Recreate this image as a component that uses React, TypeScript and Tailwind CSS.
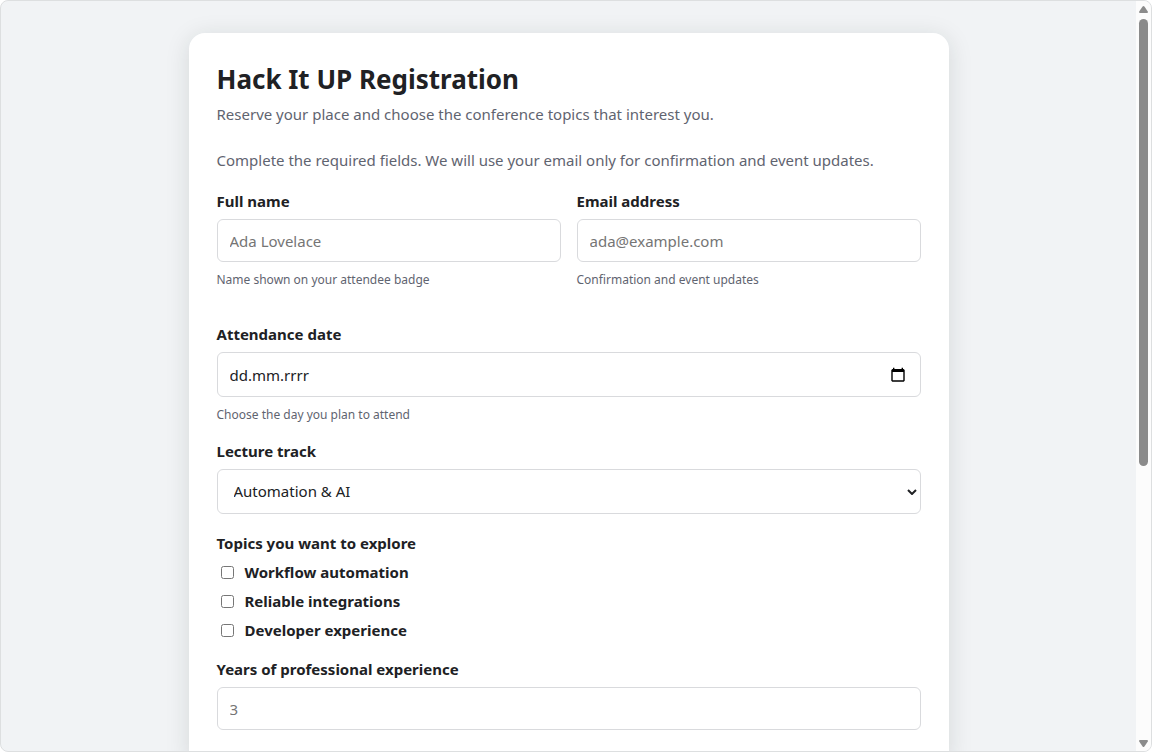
import { useState, type ReactNode } from "react";

const INPUT_STYLE =
  "w-full rounded-md border border-[#d9dadd] bg-white px-3 text-[15px] text-[#202124] focus:outline-none focus:ring-2 focus:ring-blue-400";

const TOPICS = [
  "Workflow automation",
  "Reliable integrations",
  "Developer experience",
];

const TRACKS = ["Automation & AI", "Integrations", "Developer tools"];

interface FieldProps {
  id: string;
  label: string;
  help?: string;
  children: ReactNode;
}

function Field({ id, label, help, children }: FieldProps) {
  return (
    <div className="flex flex-col">
      <label htmlFor={id} className="mb-[7px] text-[15px] leading-[22px] font-bold">
        {label}
      </label>
      {children}
      {help && (
        <p id={`${id}-help`} className="mt-2 text-xs leading-5 text-[#5f6470]">
          {help}
        </p>
      )}
    </div>
  );
}

function CalendarIcon() {
  return (
    <svg width="16" height="16" viewBox="0 0 16 16" aria-hidden="true">
      <path
        d="M3 .7h1.4V2h7.2V.7H13V2h.6l1.1 1v10.7l-1 1H2.3l-1-1V3l1.1-1H3zM2.7 5v8.3h10.6V5z"
        fill="#000"
        fillRule="evenodd"
      />
    </svg>
  );
}

function Scrollbar() {
  return (
    <div
      className="flex w-[15px] shrink-0 flex-col items-center bg-[#fcfcfc] py-1"
      aria-hidden="true"
    >
      <svg width="9" height="8" viewBox="0 0 9 8">
        <path
          d="M3.6 1.6Q4.5.4 5.4 1.6L8.8 6.5Q9.3 8 8 8H1Q-.3 8 .2 6.5Z"
          fill="#8b8b8b"
        />
      </svg>
      <div className="my-1.5 w-full flex-1">
        <div className="mx-auto h-[62.6%] w-[9px] rounded-full bg-[#8b8b8b]" />
      </div>
      <svg width="9" height="8" viewBox="0 0 9 8">
        <path
          d="M3.6 7.4Q4.5 8.6 5.4 7.4L8.8 2.5Q9.3 1 8 1H1Q-.3 1 .2 2.5Z"
          fill="#8b8b8b"
        />
      </svg>
    </div>
  );
}

export default function App() {
  const [topics, setTopics] = useState<string[]>([]);

  const toggleTopic = (topic: string) => {
    setTopics((prev) =>
      prev.includes(topic) ? prev.filter((t) => t !== topic) : [...prev, topic],
    );
  };

  return (
    <div className="flex h-screen overflow-hidden rounded-lg border border-[#dddfe0] bg-[#f1f3f5] font-['Noto_Sans','Open_Sans',sans-serif] text-[#202124]">
      <main className="min-w-0 flex-1 overflow-hidden px-4 pt-8">
        <form className="mx-auto min-h-full max-w-[760px] rounded-t-2xl bg-white p-7 shadow-[0_4px_24px_rgba(24,39,32,0.13)]">
          <h1 className="text-[26px] leading-9 font-bold">
            Hack It UP Registration
          </h1>
          <p className="mt-1.5 text-[15px] leading-[22px] text-[#5f6470]">
            Reserve your place and choose the conference topics that interest
            you.
          </p>
          <p className="mt-6 text-[15px] leading-[22px] text-[#5f6470]">
            Complete the required fields. We will use your email only for
            confirmation and event updates.
          </p>

          <div className="mt-[19px] grid grid-cols-1 gap-4 sm:grid-cols-2">
            <Field
              id="name"
              label="Full name"
              help="Name shown on your attendee badge"
            >
              <input
                id="name"
                type="text"
                placeholder="Ada Lovelace"
                aria-describedby="name-help"
                className={`${INPUT_STYLE} h-[43px] placeholder:text-[#757575]`}
              />
            </Field>
            <Field
              id="email"
              label="Email address"
              help="Confirmation and event updates"
            >
              <input
                id="email"
                type="email"
                placeholder="ada@example.com"
                aria-describedby="email-help"
                className={`${INPUT_STYLE} h-[43px] placeholder:text-[#757575]`}
              />
            </Field>
          </div>

          <div className="mt-[33px] flex flex-col gap-[15px]">
            <Field
              id="date"
              label="Attendance date"
              help="Choose the day you plan to attend"
            >
              <div className="relative">
                <input
                  id="date"
                  type="text"
                  placeholder="dd.mm.rrrr"
                  aria-describedby="date-help"
                  className={`${INPUT_STYLE} h-[45px] placeholder:text-[#202124]`}
                />
                <button
                  type="button"
                  aria-label="Open calendar"
                  className="absolute inset-y-0 right-[15px]"
                >
                  <CalendarIcon />
                </button>
              </div>
            </Field>

            <Field id="track" label="Lecture track">
              <div className="relative">
                <select
                  id="track"
                  className={`${INPUT_STYLE} h-[45px] appearance-none pl-4`}
                >
                  {TRACKS.map((track) => (
                    <option key={track}>{track}</option>
                  ))}
                </select>
                <svg
                  width="10"
                  height="6"
                  viewBox="0 0 10 6"
                  className="pointer-events-none absolute inset-y-0 right-1 my-auto"
                  aria-hidden="true"
                >
                  <path
                    d="M1 1l4 4 4-4"
                    fill="none"
                    stroke="#202124"
                    strokeWidth="2"
                  />
                </svg>
              </div>
            </Field>

            <fieldset className="pb-0.5">
              <legend className="py-[3px] text-[15px] leading-[22px] font-bold">
                Topics you want to explore
              </legend>
              <div className="mt-1 flex flex-col gap-[7px]">
                {TOPICS.map((topic) => (
                  <label
                    key={topic}
                    className="flex items-center gap-[11px] pl-1 text-[15px] leading-[22px] font-bold"
                  >
                    <input
                      type="checkbox"
                      checked={topics.includes(topic)}
                      onChange={() => toggleTopic(topic)}
                      className="size-[13px]"
                    />
                    {topic}
                  </label>
                ))}
              </div>
            </fieldset>

            <Field id="years" label="Years of professional experience">
              <input
                id="years"
                type="number"
                placeholder="3"
                className={`${INPUT_STYLE} h-[43px] placeholder:text-[#757575]`}
              />
            </Field>
          </div>
        </form>
      </main>
      <Scrollbar />
    </div>
  );
}
